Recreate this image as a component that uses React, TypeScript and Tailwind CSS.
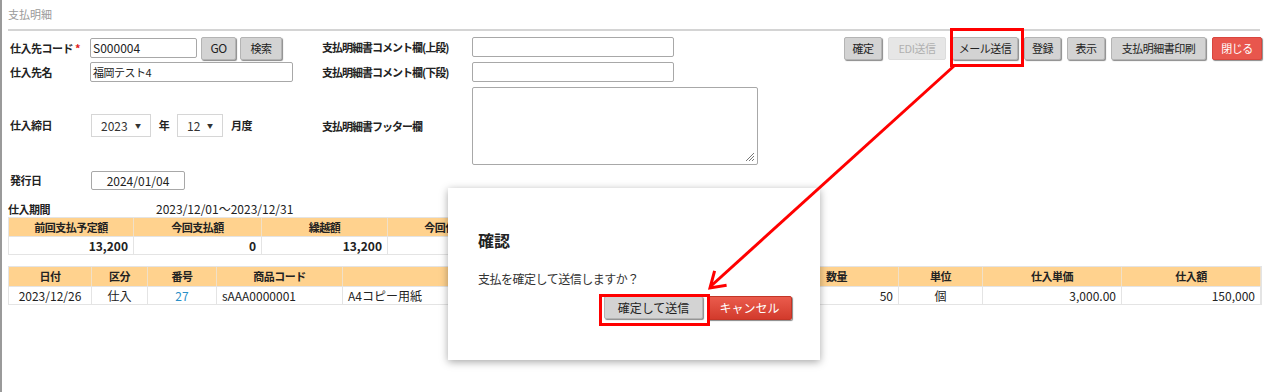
import React from "react"

const font = { fontFamily: '"Noto Sans CJK JP", "Noto Sans", sans-serif' }

const btn =
  "h-[23px] flex items-center justify-center whitespace-nowrap text-[11px] tracking-[-0.5px] text-[#222] bg-[#d3d3d3] border border-[#b4b4b4] rounded-[2px] shadow-[1px_1px_1px_#8a8a8a]"

const label = "whitespace-nowrap text-[11px] tracking-[-0.5px] font-bold"

// the last cells sit under the dialog, so their text is left out
const summaryCols = [
  { label: "前回支払予定額", value: "13,200", w: "w-[125px]" },
  { label: "今回支払額", value: "0", w: "w-[128px]" },
  { label: "繰越額", value: "13,200", w: "w-[126px]" },
  { label: "今回仕入額", value: "", w: "w-[126px]" },
  { label: "", value: "", w: "w-[126px]" },
]

const detailCols = [
  { label: "日付", value: "2023/12/26", w: "w-[83px]", align: "text-center" },
  { label: "区分", value: "仕入", w: "w-[56px]", align: "text-center" },
  { label: "番号", value: "27", w: "w-[69px]", align: "text-center text-[#2a8fc7]" },
  { label: "商品コード", value: "sAAA0000001", w: "w-[126px]", align: "text-left pl-[5px]" },
  { label: "", value: "A4コピー用紙", w: "w-[432px]", align: "text-left pl-[5px]" },
  { label: "数量", value: "50", w: "w-[124px]", align: "text-right pr-[5px]" },
  { label: "単位", value: "個", w: "w-[84px]", align: "text-center" },
  { label: "仕入単価", value: "3,000.00", w: "w-[139px]", align: "text-right pr-[5px]" },
  { label: "仕入額", value: "150,000", w: "w-[139px]", align: "text-right pr-[5px]" },
]

function Select({ value, w }: { value: string; w: string }) {
  return (
    <div className={`${w} h-[23px] border border-[#d6d6d6] flex items-center justify-between px-[9px] text-[12px] text-[#333]`}>
      <span>{value}</span>
      <span className="text-[6px] text-[#333]">▼</span>
    </div>
  )
}

export default function App() {
  return (
    <div style={font} className="relative w-[1267px] h-[392px] overflow-hidden bg-white border-l-[2px] border-[#9a9a9a] text-[#222]">
      <div className="pl-[6px] pr-[5px]">
        {/* title */}
        <div className="h-[29px] flex items-center text-[11px] text-[#9a9a9a]">支払明細</div>
        <div className="h-[2px] bg-[#d4d4d4] mr-[2px]" />

        {/* form area */}
        <div className="flex pt-[6px]">
          {/* left column */}
          <div className="w-[314px] flex flex-col">
            <div className="h-[22px] flex items-center">
              <div className={`w-[82px] pl-[2px] ${label}`}>
                仕入先コード <span className="text-[#e02020]">*</span>
              </div>
              <div className="w-[107px] h-[20px] border border-[#a8a8a8] rounded-[2px] flex items-center px-[2px] text-[12px]">S000004</div>
              <div className={`${btn} ml-[4px] w-[35px] h-[22px] text-[12px]`}>GO</div>
              <div className={`${btn} ml-[4px] w-[42px] h-[22px]`}>検索</div>
            </div>
            <div className="h-[20px] mt-[3px] flex items-center">
              <div className={`w-[82px] pl-[2px] ${label}`}>仕入先名</div>
              <div className="w-[203px] h-[20px] border border-[#a8a8a8] rounded-[2px] flex items-center px-[2px] text-[11px] tracking-[-0.5px]">福岡テスト4</div>
            </div>
            <div className="h-[23px] mt-[32px] flex items-center">
              <div className={`w-[83px] pl-[2px] ${label}`}>仕入締日</div>
              <Select value="2023" w="w-[60px]" />
              <div className={`w-[26px] text-center ${label}`}>年</div>
              <Select value="12" w="w-[46px]" />
              <div className={`ml-[8px] ${label}`}>月度</div>
            </div>
            <div className="h-[19px] mt-[34px] flex items-center">
              <div className={`w-[83px] pl-[2px] ${label}`}>発行日</div>
              <div className="w-[94px] h-[19px] border border-[#a8a8a8] rounded-[2px] flex items-center justify-center text-[12px]">2024/01/04</div>
            </div>
          </div>

          {/* middle column */}
          <div className="flex flex-col">
            <div className="h-[20px] flex items-center">
              <div className={`w-[150px] ${label} tracking-[-1px]`}>支払明細書コメント欄(上段)</div>
              <div className="w-[202px] h-[20px] border border-[#a8a8a8] rounded-[2px]" />
            </div>
            <div className="h-[20px] mt-[5px] flex items-center">
              <div className={`w-[150px] ${label} tracking-[-1px]`}>支払明細書コメント欄(下段)</div>
              <div className="w-[202px] h-[20px] border border-[#a8a8a8] rounded-[2px]" />
            </div>
            <div className="h-[78px] mt-[5px] flex items-center">
              <div className={`w-[150px] ${label} tracking-[-1px]`}>支払明細書フッター欄</div>
              <div className="relative w-[286px] h-[78px] border border-[#a8a8a8] rounded-[2px]">
                <svg className="absolute right-[2px] bottom-[2px]" width="10" height="10" viewBox="0 0 10 10">
                  <path d="M9 1L1 9M9 4L4 9M9 7L7 9" stroke="#777" strokeWidth="1" />
                </svg>
              </div>
            </div>
          </div>

          {/* buttons */}
          <div className="flex-1 flex justify-end gap-[6px] h-[23px]">
            <div className={`${btn} w-[38px]`}>確定</div>
            <div className={`${btn} w-[58px] bg-[#e6e6e6] text-[#b0b0b0] border-[#dcdcdc] shadow-none`}>EDI送信</div>
            <div className={`${btn} w-[66px]`}>メール送信</div>
            <div className={`${btn} w-[37px]`}>登録</div>
            <div className={`${btn} w-[38px]`}>表示</div>
            <div className={`${btn} w-[95px]`}>支払明細書印刷</div>
            <div className={`${btn} w-[50px] bg-[#e8564d] border-[#d8463e] text-white`}>閉じる</div>
          </div>
        </div>

        {/* period */}
        <div className="h-[16px] mt-[11px] flex items-center text-[12px]">
          <div className={`w-[148px] ${label}`}>仕入期間</div>
          <div>2023/12/01～2023/12/31</div>
        </div>

        {/* summary table */}
        <div className="flex flex-col w-max border border-[#e4e4e4]">
          <div className="flex h-[18px] bg-[#ffd28e]">
            {summaryCols.map((c, i) => (
              <div key={i} className={`${c.w} border-r border-[#f0e0c8] flex items-center justify-center ${label}`}>
                {c.label}
              </div>
            ))}
          </div>
          <div className="flex h-[18px] border-t border-[#e4e4e4]">
            {summaryCols.map((c, i) => (
              <div key={i} className={`${c.w} border-r border-[#e4e4e4] flex items-center justify-end pr-[5px] text-[12px] font-bold`}>
                {c.value}
              </div>
            ))}
          </div>
        </div>

        {/* detail table */}
        <div className="mt-[11px] flex flex-col w-max border border-[#e4e4e4]">
          <div className="flex h-[19px] bg-[#ffd28e]">
            {detailCols.map((c, i) => (
              <div key={i} className={`${c.w} border-r border-[#f0e0c8] flex items-center justify-center ${label}`}>
                {c.label}
              </div>
            ))}
          </div>
          <div className="flex h-[18px] border-t border-[#e4e4e4]">
            {detailCols.map((c, i) => (
              <div key={i} className={`${c.w} ${c.align} border-r border-[#e4e4e4] leading-[18px] text-[12px] whitespace-nowrap`}>
                {c.value}
              </div>
            ))}
          </div>
        </div>
      </div>

      {/* confirm dialog */}
      <div className="absolute left-[446px] top-[188px] w-[372px] h-[172px] bg-white shadow-[0_2px_8px_rgba(0,0,0,0.35)] pl-[30px] pt-[40px]">
        <div className="text-[16px] font-bold leading-[24px]">確認</div>
        <div className="mt-[18px] text-[12px] tracking-[-0.5px] text-[#333] leading-[18px] whitespace-nowrap">支払を確定して送信しますか？</div>
        <div className="mt-[8px] flex pl-[126px] gap-[4px]">
          <div className={`${btn} w-[99px] h-[23px] text-[12px] tracking-normal`}>確定して送信</div>
          <div className="w-[85px] h-[24px] flex items-center justify-center whitespace-nowrap text-[12px] text-white rounded-[2px] bg-gradient-to-b from-[#ea5b4c] to-[#d23a2c] border border-[#c33527] shadow-[1px_1px_1px_#888]">
            キャンセル
          </div>
        </div>
      </div>

      {/* highlight boxes */}
      <div className="absolute left-[948px] top-[28px] w-[74px] h-[39px] border-[3px] border-[#ff0000]" />
      <div className="absolute left-[597px] top-[294px] w-[111px] h-[32px] border-[3px] border-[#ff0000]" />

      {/* arrow */}
      <svg className="absolute left-0 top-0 pointer-events-none" width="1267" height="392">
        <line x1="952" y1="66" x2="709" y2="286" stroke="#ff0000" strokeWidth="3" />
        <polyline points="724.6,285.3 708,288 712.6,270.9" fill="none" stroke="#ff0000" strokeWidth="3" strokeLinejoin="miter" />
      </svg>
    </div>
  )
}
